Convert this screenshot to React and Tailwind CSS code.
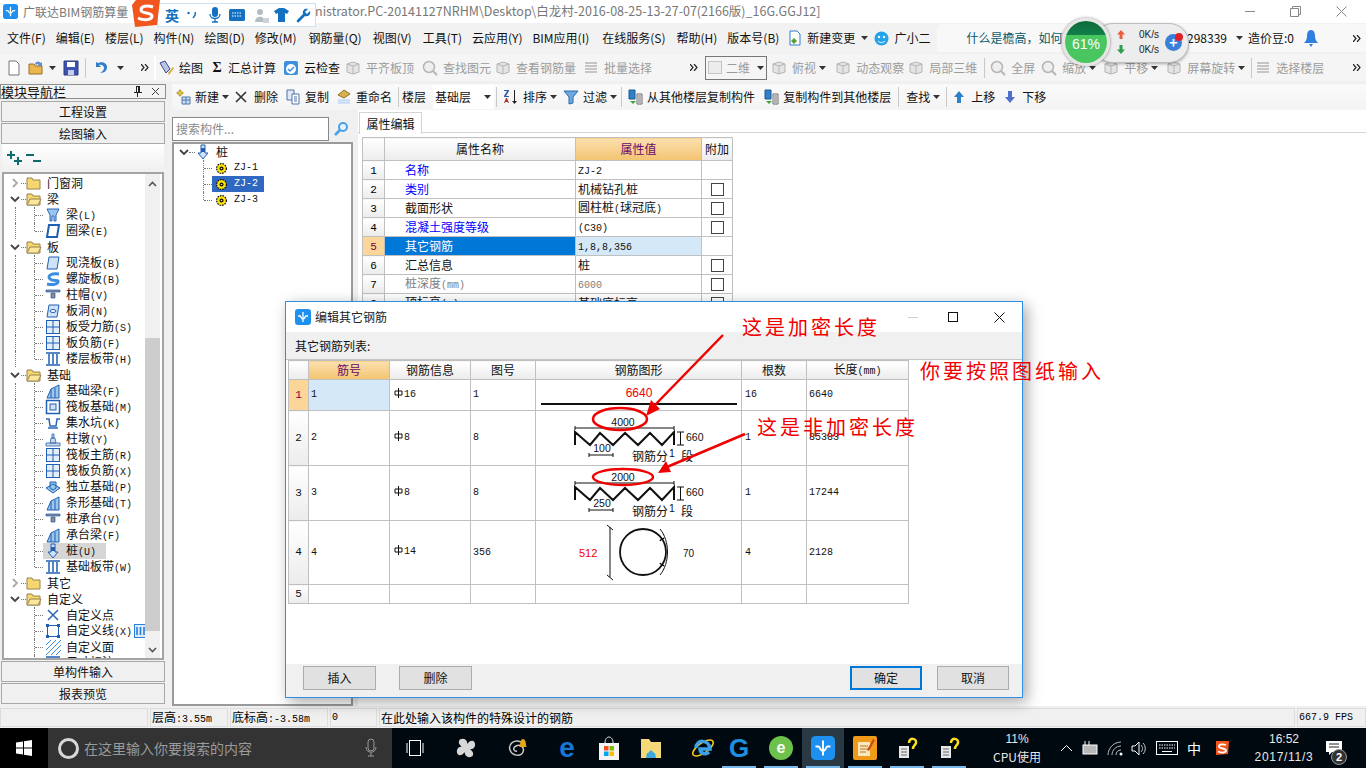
import React from "react";

const sans = "font-['Noto_Sans_CJK_SC','Noto_Sans',sans-serif]";

// CJK at 12px, latin in a 6px-wide mono, like the SimSun labels of the app
function Sim({ text, className = "" }) {
    const parts = text.split(/([\x20-\x7e]+)/).filter(Boolean);
    return (
        <span className={`inline-flex items-baseline leading-none whitespace-pre ${className}`}>
            {parts.map((p, i) =>
                /^[\x20-\x7e]+$/.test(p) ? (
                    <span key={i} className="font-['Liberation_Mono',monospace] text-[10px]">{p}</span>
                ) : (
                    <span key={i} className="text-[12px]">{p}</span>
                )
            )}
        </span>
    );
}

const Svg = ({ children, s = 16, className = "" }) => (
    <svg width={s} height={s} viewBox="0 0 16 16" className={`shrink-0 ${className}`}>{children}</svg>
);

const Caret = ({ className = "" }) => (
    <svg width="7" height="4" viewBox="0 0 7 4" className={`shrink-0 ${className}`}><path d="M0 0h7L3.5 4z" fill="#333" /></svg>
);

const Sep = ({ className = "" }) => <div className={`w-px h-5 bg-[#c8c8c8] shrink-0 ${className}`} />;

const Dbl = ({ className = "" }) => (
    <svg width="8" height="7" viewBox="0 0 8 7" className={`shrink-0 ${className}`}>
        <path d="M0 0l3 3.5L0 7M4 0l3 3.5L4 7" fill="none" stroke="#222" strokeWidth="1.2" />
    </svg>
);

const GrayBox = () => (
    <Svg>
        <path d="M2 4l6-2 6 2v8l-6 2-6-2z" fill="#e4e4e4" stroke="#b5b5b5" />
        <path d="M2 4l6 2 6-2M8 6v8" fill="none" stroke="#b5b5b5" />
    </Svg>
);
const GrayLens = () => (
    <Svg>
        <circle cx="7" cy="7" r="5.5" fill="#eee" stroke="#b5b5b5" strokeWidth="1.5" />
        <path d="M11 11l4 4" stroke="#b5b5b5" strokeWidth="2" />
    </Svg>
);
const GrayLines = () => (
    <Svg>
        <path d="M2 3h12M2 6h12M2 9h12M2 12h12" stroke="#b5b5b5" strokeWidth="1.5" />
    </Svg>
);

const treeIcons = {
    beam: <path d="M2 2h12l-3 6v6H9V9H7v5H5V8z" fill="#9cc5ea" stroke="#2a66b8" />,
    ring: <path d="M4 2h10l-2 12H2z" fill="#fff" stroke="#1f5fb4" strokeWidth="2" />,
    slab: <path d="M4 2h10l-2 12H2z" fill="#cfe2f6" stroke="#1f5fb4" />,
    spiral: <path d="M14 3C6 2 2 5 5 8s9 0 8 3-7 3-11 2" fill="none" stroke="#3d8ee0" strokeWidth="3" />,
    cap: <path d="M1 3h14v2H1zM6 6h4v5H6z" fill="#8a8a8a" stroke="#1f5fb4" strokeWidth=".7" />,
    hole: <><path d="M4 2h10l-2 12H2z" fill="#cfe2f6" stroke="#1f5fb4" /><ellipse cx="8" cy="8" rx="3" ry="1.5" fill="#fff" stroke="#1f5fb4" /></>,
    grid: <><rect x="1.5" y="1.5" width="13" height="13" fill="#e3eefa" stroke="#1f5fb4" /><path d="M1.5 8h13M8 1.5v13" stroke="#1f5fb4" /></>,
    band: <path d="M1 2h14M1 14h14M4 3v10M8 3v10M12 3v10" stroke="#1f5fb4" strokeWidth="1.5" fill="none" />,
    foot: <><path d="M2 15l4-9 8-4v13z" fill="#9cc5ea" stroke="#1f5fb4" /><path d="M6 6v9M10 5v10" stroke="#1f5fb4" /></>,
    raft: <><rect x="1.5" y="1.5" width="13" height="13" fill="#fff" stroke="#1f5fb4" strokeWidth="1.5" /><rect x="5" y="5" width="6" height="6" fill="#cfe2f6" stroke="#1f5fb4" /></>,
    pit: <path d="M1 4l3 0 1 7h6l1-7 3 0M3 13h10" fill="none" stroke="#2a66b8" strokeWidth="1.5" />,
    pier: <path d="M1 12h14v3H1zM5 12l1-5h4l1 5zM7 3h2v4H7z" fill="#cfd8e2" stroke="#2a66b8" strokeWidth=".8" />,
    iso: <path d="M1 9l7-4 7 4-7 5zM5 3h6v6l-3 2-3-2z" fill="#9cc5ea" stroke="#1f5fb4" />,
    pile: <><path d="M6 1h4v8h3l-5 6-5-6h3z" fill="#cfe2f6" stroke="#1f5fb4" /><rect x="6" y="4" width="4" height="4" fill="#1f5fb4" /></>,
    cross: <path d="M3 3l10 10M13 3L3 13" stroke="#2a66b8" strokeWidth="1.5" />,
    line: <><rect x="2.5" y="2.5" width="11" height="11" fill="none" stroke="#1f5fb4" /><path d="M1 1h3v3H1zM12 1h3v3h-3zM1 12h3v3H1zM12 12h3v3h-3z" fill="#1f5fb4" /></>,
    hatch: <path d="M1 6l5-5M1 11L11 1M1 16L16 1M6 16L16 6M11 16l5-5" stroke="#3d8ee0" />,
};

const tree = [
    { t: "门窗洞", folder: true, closed: true },
    { t: "梁", folder: true },
    { t: "梁(L)", i: "beam" }, { t: "圈梁(E)", i: "ring", last: true },
    { t: "板", folder: true },
    { t: "现浇板(B)", i: "slab" }, { t: "螺旋板(B)", i: "spiral" }, { t: "柱帽(V)", i: "cap" }, { t: "板洞(N)", i: "hole" },
    { t: "板受力筋(S)", i: "grid" }, { t: "板负筋(F)", i: "grid" }, { t: "楼层板带(H)", i: "band", last: true },
    { t: "基础", folder: true },
    { t: "基础梁(F)", i: "foot" }, { t: "筏板基础(M)", i: "raft" }, { t: "集水坑(K)", i: "pit" }, { t: "柱墩(Y)", i: "pier" },
    { t: "筏板主筋(R)", i: "grid" }, { t: "筏板负筋(X)", i: "grid" }, { t: "独立基础(P)", i: "iso" }, { t: "条形基础(T)", i: "foot" },
    { t: "桩承台(V)", i: "cap" }, { t: "承台梁(F)", i: "foot" }, { t: "桩(U)", i: "pile", sel: true }, { t: "基础板带(W)", i: "band", last: true },
    { t: "其它", folder: true, closed: true },
    { t: "自定义", folder: true },
    { t: "自定义点", i: "cross", noOuter: true }, { t: "自定义线(X)", i: "line", noOuter: true, extra: true }, { t: "自定义面", i: "hatch", noOuter: true },
    { t: "尺寸标注(C)", i: "band", noOuter: true },
];

function Folder({ open }) {
    return (
        <Svg>
            <path d="M1 3h5l1 2h7v9H1z" fill="#f6d66f" stroke="#9a8450" />
            {open && <path d="M1 14l3-6h11l-3 6z" fill="#fbe79c" stroke="#9a8450" />}
        </Svg>
    );
}

function Chevron({ closed }) {
    return (
        <svg width="10" height="10" viewBox="0 0 10 10" className="shrink-0">
            {closed
                ? <path d="M3 1l4 4-4 4" fill="none" stroke="#aaa" strokeWidth="1.8" />
                : <path d="M1 3l4 4 4-4" fill="none" stroke="#444" strokeWidth="1.8" />}
        </svg>
    );
}

const VDots = ({ half }) => (
    <div className={`w-0 border-l border-dotted border-[#777] shrink-0 ${half ? "h-2 self-start" : "h-4"}`} />
);
const HDots = ({ className }) => <div className={`border-t border-dotted border-[#777] shrink-0 ${className}`} />;

function TreeRow({ r }) {
    if (r.folder) {
        return (
            <div className="flex items-center h-4 pl-[6px]">
                <Chevron closed={r.closed} />
                <HDots className="w-[5px] ml-px" />
                <Folder open={!r.closed} />
                <span className="ml-[5px] text-[12px] leading-none text-[#111]">{r.t}</span>
            </div>
        );
    }
    return (
        <div className="flex items-center h-4 pl-[11px]">
            {r.noOuter ? <div className="w-px shrink-0" /> : <VDots />}
            <div className="w-[18px] shrink-0" />
            <VDots half={r.last} />
            <HDots className="w-[8px]" />
            <div className={`flex items-center h-4 pl-[2px] ${r.sel ? "bg-[#d6d6d6] pr-[10px]" : "pr-[3px]"}`}>
                <Svg>{treeIcons[r.i]}</Svg>
                <Sim text={r.t} className="ml-[5px] text-[#111]" />
            </div>
            {r.extra && (
                <svg width="13" height="14" viewBox="0 0 13 14" className="shrink-0 -ml-px">
                    <rect x=".5" y=".5" width="12" height="13" fill="#dcebfb" stroke="#2a7fd6" />
                    <path d="M3 3v8M6.500 3v8M10 3v8" stroke="#2a7fd6" strokeWidth="1.6" />
                </svg>
            )}
        </div>
    );
}

function NavButton({ children }) {
    return (
        <div className="h-[21px] mx-px flex items-center justify-center border border-[#a8a8a8] bg-[#f0f0f0] text-[12px] text-[#111] shrink-0">
            {children}
        </div>
    );
}

function LeftPanel() {
    return (
        <div className="w-[166px] shrink-0 flex flex-col bg-[#f0f0f0]">
            <div className="h-[15px] border border-[#8e8e8e] flex items-center text-[13px] leading-none text-[#111] bg-[#f3f3f3] shrink-0">
                <span>模块导航栏</span>
                <svg width="10" height="11" viewBox="0 0 10 11" className="ml-auto"><path d="M3 0v6H1v1h3v4h1V7h4V6H7V0zM4 1h1v5H4z" fill="#222" /></svg>
                <svg width="9" height="9" viewBox="0 0 9 9" className="ml-[8px] mr-[5px]"><path d="M1 1l7 7M8 1L1 8" stroke="#444" /></svg>
            </div>
            <div className="h-[2px] shrink-0" />
            <NavButton>工程设置</NavButton>
            <div className="h-px shrink-0" />
            <NavButton>绘图输入</NavButton>
            <div className="h-[28px] mx-[2px] flex items-center pl-[5px] gap-[3px] bg-gradient-to-b from-white to-[#f0f0f0] shrink-0">
                <svg width="16" height="16" viewBox="0 0 16 16"><path d="M3 1h2v3h3v2H5v3H3V6H0V4h3zM10 7h2v3h3v2h-3v3h-2v-3H7v-2h3z" fill="#0e6b6b" /></svg>
                <svg width="16" height="16" viewBox="0 0 16 16"><path d="M0 4h8v2H0zM7 10h8v2H7z" fill="#0e6b6b" /></svg>
            </div>
            <div className="h-[488px] mx-[2px] border-2 border-[#a4a4a4] bg-white flex overflow-hidden shrink-0">
                <div className="flex-1 min-w-0 pt-[1px] overflow-hidden bg-white">
                    {tree.map((r, i) => <TreeRow key={i} r={r} />)}
                </div>
                <div className="w-[15px] shrink-0 bg-[#f0f0f0] flex flex-col items-center mr-[2px]">
                    <svg width="9" height="6" viewBox="0 0 9 6" className="mt-[7px] mb-[150px]"><path d="M1 5l3.500-3.500L8 5" fill="none" stroke="#555" strokeWidth="1.6" /></svg>
                    <div className="h-[293px] w-full bg-[#cdcdcd] mt-[1px]" />
                    <svg width="9" height="6" viewBox="0 0 9 6" className="mt-[16px]"><path d="M1 1l3.500 3.500L8 1" fill="none" stroke="#555" strokeWidth="1.6" /></svg>
                </div>
            </div>
            <div className="h-px shrink-0" />
            <NavButton>单构件输入</NavButton>
            <div className="h-px shrink-0" />
            <NavButton>报表预览</NavButton>
        </div>
    );
}

function Tool({ icon, label, off, caret, className = "", labelCls = "ml-[5px]" }) {
    return (
        <div className={`flex items-center shrink-0 text-[12px] ${off ? "text-[#9c9c9c]" : "text-[#111]"} ${className}`}>
            {icon}
            <span className={`whitespace-nowrap ${labelCls}`}>{label}</span>
            {caret && <Caret className="ml-[3px]" />}
        </div>
    );
}

function TopToolbar() {
    return (
        <div className="h-[27px] flex items-center bg-[#f5f5f5] shrink-0 pl-[6px]">
            <Svg><path d="M3 1h7l3 3v11H3z" fill="#fff" stroke="#777" /></Svg>
            <Svg className="ml-[6px]"><path d="M1 4h5l1 2h7v8H1z" fill="#e9b64f" stroke="#96702a" /><path d="M7 3c2-2 4-2 6 0l1-1v4h-4l1-1c-1-1-2-1-3 0z" fill="#5d8fd0" /></Svg>
            <Caret className="ml-[5px]" />
            <Svg className="ml-[7px]" s={16}><path d="M1 1h14v14H1z" fill="#3d52b0" stroke="#2a3a80" /><path d="M4 2h8v5H4z" fill="#fff" /><path d="M5 10h6v5H5z" fill="#c5cdea" /></Svg>
            <Sep className="ml-[6px]" />
            <Svg className="ml-[6px]"><path d="M4 2v5h5L7 5c3-1 5 1 5 3 0 2-2 4-4 5 5 0 7-3 7-6 0-4-5-6-9-4z" fill="#2f7fc9" /></Svg>
            <Caret className="ml-[9px]" />
            <Dbl className="ml-[17px]" />
            <div className="w-[2px] h-[25px] bg-white ml-[5px]" />
            <Tool className="ml-[2px]" label="绘图" icon={<Svg><path d="M2 3l5-2 5 8-4 4z" fill="#b9c6e6" stroke="#3b4b8c" /><path d="M10 13l5-6 1 1-5 7z" fill="#d6a92d" /></Svg>} />
            <Tool className="ml-[8px]" label="汇总计算" icon={<span className="w-[12px] text-center text-[14px] font-bold leading-none font-['Liberation_Serif',serif]">Σ</span>} />
            <Tool className="ml-[7px]" label="云检查" icon={<Svg><rect x="1" y="1" width="14" height="14" rx="2" fill="#3f8fdc" /><circle cx="8" cy="9" r="5" fill="#fff" /><path d="M5 9l2 2 4-4" fill="none" stroke="#3f8fdc" strokeWidth="1.500" /></Svg>} />
            <Tool off className="ml-[5px]" label="平齐板顶" icon={<GrayBox />} />
            <Tool off className="ml-[8px]" label="查找图元" icon={<GrayLens />} />
            <Tool off className="ml-[4px]" label="查看钢筋量" icon={<GrayBox />} />
            <Tool off className="ml-[7px]" label="批量选择" icon={<GrayLines />} />
            <Dbl className="ml-[38px]" />
            <div className="w-[62px] h-[24px] border border-[#777] ml-[7px] flex items-center pl-[2px] shrink-0">
                <div className="w-[14px] h-[13px] bg-[#ececec] border border-[#c4c4c4]" />
                <span className="ml-[4px] text-[12px] text-[#9c9c9c]">二维</span>
                <Caret className="ml-auto mr-[2px]" />
            </div>
            <Tool off className="ml-[4px]" label="俯视" caret icon={<GrayBox />} />
            <Tool off className="ml-[9px]" label="动态观察" icon={<GrayBox />} />
            <Tool off className="ml-[4px]" label="局部三维" icon={<GrayBox />} />
            <Sep className="ml-[7px]" />
            <Tool off className="ml-[5px]" label="全屏" icon={<GrayLens />} />
            <Tool off className="ml-[6px]" label="缩放" caret icon={<GrayLens />} />
            <Tool off className="ml-[7px]" label="平移" caret icon={<GrayBox />} />
            <Tool off className="ml-[8px]" label="屏幕旋转" caret icon={<GrayBox />} />
            <Sep className="ml-[6px]" />
            <Tool off className="ml-[3px]" label="选择楼层" icon={<GrayLines />} />
            <Dbl className="ml-[29px]" />
        </div>
    );
}

function SecondToolbar() {
    const lab = "ml-[4px]";
    return (
        <div className="h-[26px] flex items-center bg-gradient-to-b from-[#fafafa] to-[#f4f4f4] pl-[3px] shrink-0">
            <Tool labelCls={lab} label="新建" caret icon={<Svg><path d="M4 1h2v2h2v2H6v2H4V5H2V3h2z" fill="#e8c33c" stroke="#9a7f1c" strokeWidth=".5" /><path d="M7 8h8v7H7z" fill="#cfe0f4" stroke="#4a78b0" /><path d="M7 11h8M11 8v7" stroke="#4a78b0" /></Svg>} />
            <svg width="12" height="12" viewBox="0 0 12 12" className="ml-[6px] shrink-0"><path d="M1 1l10 10M11 1L1 11" stroke="#333" strokeWidth="1.6" /></svg>
            <span className="ml-[7px] text-[12px] text-[#111]">删除</span>
            <Tool labelCls={lab} className="ml-[7px]" label="复制" icon={<Svg><path d="M2 1h7v10H2z" fill="#dfe9f7" stroke="#4f72a8" /><path d="M7 5h7v10H7z" fill="#fff" stroke="#4f72a8" /><path d="M9 8h3M9 10h3M9 12h3" stroke="#4f72a8" /></Svg>} />
            <Tool labelCls={lab} className="ml-[7px]" label="重命名" icon={<Svg><path d="M2 6l6-5 6 4-6 4z" fill="#d9b04c" stroke="#8f7326" /><path d="M2 10h12v5H2z" fill="#cfe0f4" /></Svg>} />
            <Sep className="ml-[6px]" />
            <span className="ml-[3px] text-[12px] text-[#111]">楼层</span>
            <div className="ml-[7px] w-[61px] h-[24px] bg-white flex items-center pl-[2px] shrink-0">
                <span className="text-[12px] text-[#111]">基础层</span>
                <Caret className="ml-auto mr-[3px]" />
            </div>
            <Sep className="ml-[2px]" />
            <Tool labelCls={lab} className="ml-[6px]" label="排序" caret icon={<Svg><path d="M1 1h5v1L3 7h3v1H1V7l3-5H1z" fill="#2f5da8" /><path d="M1 14l2-5h1l2 5H5l-.5-1h-2L2 14z" fill="#a83a2f" /><path d="M11 1h1v11h2l-2.500 3L9 12h2z" fill="#222" /></Svg>} />
            <Tool labelCls={lab} className="ml-[6px]" label="过滤" caret icon={<Svg><path d="M1 2h14L10 8v6l-4 1V8z" fill="#6ea8e0" stroke="#2f6aaa" /></Svg>} />
            <Sep className="ml-[4px]" />
            <Tool labelCls={lab} className="ml-[5px]" label="从其他楼层复制构件" icon={<Svg><path d="M2 1h6v9H2z" fill="#2f7fc9" stroke="#1d5a94" /><path d="M3 12l3 3 3-3z" fill="#3ca53c" /><path d="M10 5h5v10h-5z" fill="#fff" stroke="#666" /><path d="M11 7h3M11 9h3M11 11h3M11 13h3" stroke="#666" /></Svg>} />
            <Tool labelCls={lab} className="ml-[8px]" label="复制构件到其他楼层" icon={<Svg><path d="M2 1h6v9H2z" fill="#2f7fc9" stroke="#1d5a94" /><path d="M3 12l3 3 3-3z" fill="#3ca53c" /><path d="M10 5h5v10h-5z" fill="#fff" stroke="#666" /><path d="M11 7h3M11 9h3M11 11h3M11 13h3" stroke="#666" /></Svg>} />
            <Sep className="ml-[7px]" />
            <span className="ml-[7px] text-[12px] text-[#111]">查找</span>
            <Caret className="ml-[3px]" />
            <Sep className="ml-[6px]" />
            <Tool labelCls={lab} className="ml-[4px]" label="上移" icon={<Svg><path d="M8 2l5 6h-3v6H6V8H3z" fill="#2f7fc9" /></Svg>} />
            <Tool labelCls={lab} className="ml-[7px]" label="下移" icon={<Svg><path d="M8 14l5-6h-3V2H6v6H3z" fill="#4f6fc9" /></Svg>} />
        </div>
    );
}

function ComponentTree() {
    const gear = (
        <Svg s={13}>
            <circle cx="8" cy="8" r="6" fill="#ffe400" stroke="#111" strokeWidth="1.500" strokeDasharray="2 1.200" />
            <circle cx="8" cy="8" r="2.500" fill="#111" />
            <circle cx="8" cy="8" r="1" fill="#ffe400" />
        </Svg>
    );
    return (
        <div className="w-[182px] shrink-0 flex flex-col">
            <div className="flex items-center h-[24px] mt-[7px] shrink-0">
                <div className="w-[157px] h-full border border-[#888] bg-white flex items-center pl-[3px] text-[12px] text-[#8a8a8a]">搜索构件...</div>
                <svg width="16" height="16" viewBox="0 0 16 16" className="ml-[4px]"><circle cx="10" cy="6" r="4" fill="#e6f3ff" stroke="#4aa0e6" strokeWidth="2" /><path d="M7 9l-5 5" stroke="#4aa0e6" strokeWidth="2.500" /></svg>
            </div>
            <div className="flex-1 mt-px mr-px border-2 border-[#9a9a9a] bg-white pl-[5px] overflow-hidden">
                <div className="flex items-center h-4">
                    <Chevron />
                    <HDots className="w-[6px]" />
                    <Svg><path d="M6 1h4v8h3l-5 6-5-6h3z" fill="#cfe2f6" stroke="#1f5fb4" /><rect x="6" y="4" width="4" height="4" fill="#1f5fb4" /></Svg>
                    <span className="ml-[5px] text-[12px] leading-none text-[#111]">桩</span>
                </div>
                {["ZJ-1", "ZJ-2", "ZJ-3"].map((z) => (
                    <div key={z} className="flex items-center h-4 pl-[24px]">
                        <VDots half={z === "ZJ-3"} />
                        <HDots className="w-[8px]" />
                        <div className={`flex items-center h-4 w-[52px] pl-[3px] ${z === "ZJ-2" ? "bg-[#2f68c0] text-white" : "text-[#111]"}`}>
                            {gear}
                            <span className="ml-[6px] font-['Liberation_Mono',monospace] text-[10px] leading-none">{z}</span>
                        </div>
                    </div>
                ))}
            </div>
        </div>
    );
}

const Check = () => <div className="w-[13px] h-[13px] border border-[#444] bg-white mx-auto" />;

const props = [
    { n: "名称", v: "ZJ-2", blue: true },
    { n: "类别", v: "机械钻孔桩", blue: true, c: true },
    { n: "截面形状", v: "圆柱桩(球冠底)", c: true },
    { n: "混凝土强度等级", v: "(C30)", blue: true, c: true },
    { n: "其它钢筋", v: "1,8,8,356", sel: true },
    { n: "汇总信息", v: "桩", c: true },
    { n: "桩深度(mm)", v: "6000", gray: true, c: true },
    { n: "顶标高(m)", v: "基础底标高", c: true },
];

const thCls = "border border-[#c0c0c0] bg-gradient-to-b from-white to-[#ececec] font-normal text-[12px] text-[#111] p-0";
const hotCls = "border border-[#c0c0c0] bg-gradient-to-b from-[#fbdfae] to-[#f3c46f] font-normal text-[12px] text-[#6a0a6a] p-0";
const numCls = "border border-[#c0c0c0] bg-gradient-to-b from-white to-[#ececec] text-center p-0";

function PropertyPane() {
    return (
        <div className="flex-1 min-w-0 bg-white flex flex-col ml-[4px] pt-[2px]">
            <div className="h-[21px] border-b border-[#d4d4d4] flex pl-px shrink-0">
                <div className="w-[63px] h-[22px] border border-b-0 border-[#d4d4d4] bg-white flex items-center justify-center text-[12px] text-[#111]">属性编辑</div>
            </div>
            <table className="table-fixed border-collapse ml-[4px] mt-[4px] w-[370px] bg-white leading-none">
                <colgroup>
                    <col className="w-[22px]" /><col className="w-[191px]" /><col className="w-[126px]" /><col className="w-[31px]" />
                </colgroup>
                <thead>
                    <tr className="h-[23px]">
                        <th className={thCls} /><th className={thCls}>属性名称</th><th className={hotCls}>属性值</th><th className={thCls}>附加</th>
                    </tr>
                </thead>
                <tbody>
                    {props.map((r, i) => (
                        <tr key={r.n} className="h-[19px]">
                            <td className={r.sel ? "border border-[#c0c0c0] bg-[#fcd598] text-center p-0 text-[#800040]" : numCls}>
                                <span className="relative -top-[2px] font-['Liberation_Mono',monospace] text-[11px]">{i + 1}</span>
                            </td>
                            <td className={`border border-[#c0c0c0] p-0 pl-[20px] ${r.sel ? "bg-[#0078d7] text-white" : r.blue ? "text-[#0000ff]" : r.gray ? "text-[#808080]" : "text-[#111]"}`}>
                                <Sim text={r.n} className="relative -top-[2px]" />
                            </td>
                            <td className={`border border-[#c0c0c0] p-0 pl-[2px] ${r.sel ? "bg-[#d5e8f8] text-[#111]" : r.gray ? "text-[#808080]" : "text-[#111]"}`}>
                                <Sim text={r.v} className="relative -top-[2px]" />
                            </td>
                            <td className="border border-[#c0c0c0] p-0">{r.c && <Check />}</td>
                        </tr>
                    ))}
                </tbody>
            </table>
        </div>
    );
}

const DimText = ({ x, y, children, fill = "#111", anchor = "start", size = 10.5, cjk = false }) => (
    <text x={x} y={y} fill={fill} textAnchor={anchor} fontSize={size} fontFamily={cjk ? "'Noto Sans CJK SC',sans-serif" : "'Liberation Sans',sans-serif"}>{children}</text>
);

function Zigzag({ top, small }) {
    return (
        <svg width="205" height="54" viewBox="0 0 205 54" className="block">
            <DimText x="87" y="15" anchor="middle">{top}</DimText>
            <path d="M39 15v4M39 17h99M138 15v4" stroke="#111" fill="none" />
            <path d="M39 34V21l15 13 10-12 13 12 12-12 13 12 12-12 12 12 12-13v13" stroke="#111" strokeWidth="2" fill="none" />
            <path d="M141 21h7M144.500 21v13M141 34h7" stroke="#111" fill="none" />
            <DimText x="150" y="30">660</DimText>
            <DimText x="66" y="41" anchor="middle">{small}</DimText>
            <path d="M53 42v4M53 44h24M77 42v4" stroke="#111" fill="none" />
            <DimText x="96" y="50" size={12} cjk>钢筋分</DimText>
            <DimText x="133" y="46">1</DimText>
            <DimText x="145" y="50" size={12} cjk>段</DimText>
        </svg>
    );
}

function Circ() {
    return (
        <svg width="205" height="63" viewBox="0 0 205 63" className="block">
            <DimText x="43" y="36" fill="#f00000" size={11}>512</DimText>
            <path d="M74 6v50M71 4l6 5M71 54l6 5" stroke="#111" fill="none" />
            <circle cx="107" cy="31" r="23" fill="none" stroke="#111" strokeWidth="1.800" />
            <path d="M124 20c1-2 3-2 4-3M124 42c1 2 3 2 4 3" fill="none" stroke="#111" strokeWidth="1.500" />
            <path d="M124 8c10 12 10 34 0 46" fill="none" stroke="#111" />
            <DimText x="147" y="36" size={10}>70</DimText>
        </svg>
    );
}

const steel = [
    { h: "h-[30px]", v: "1", d: "⌀16", img: "1", fig: "line", n: "16", len: "6640" },
    { h: "h-[55px]", v: "2", d: "⌀8", img: "8", fig: "a", n: "1", len: "85383" },
    { h: "h-[55px]", v: "3", d: "⌀8", img: "8", fig: "b", n: "1", len: "17244" },
    { h: "h-[64px]", v: "4", d: "⌀14", img: "356", fig: "c", n: "4", len: "2128" },
    { h: "h-[19px]", v: "5" },
];

const cellCls = "border border-[#c0c0c0] p-0 pl-[2px] font-['Liberation_Mono',monospace] text-[10px] text-[#111]";

function SteelMark({ d }) {
    if (!d) return null;
    return (
        <span className="inline-flex items-center">
            <svg width="9" height="10" viewBox="0 0 9 10" className="mr-px relative -top-px"><path d="M1 3h7v4H1zM4.500 0v10" fill="none" stroke="#111" /></svg>
            <span className="relative top-px">{d.slice(1)}</span>
        </span>
    );
}

function Figure({ f }) {
    if (f === "line") {
        return (
            <svg width="205" height="30" viewBox="0 0 205 30" className="block">
                <DimText x="103" y="17" anchor="middle" fill="#f00000" size={12}>6640</DimText>
                <path d="M5 24h196" stroke="#111" strokeWidth="2" />
            </svg>
        );
    }
    if (f === "a") return <Zigzag top="4000" small="100" />;
    if (f === "b") return <Zigzag top="2000" small="250" />;
    if (f === "c") return <Circ />;
    return null;
}

function Dialog() {
    return (
        <div className="absolute left-[285px] top-[301px] w-[738px] h-[397px] border border-[#2f8fe6] bg-white flex flex-col shadow-[4px_4px_14px_rgba(0,0,0,0.35)]">
            <div className="h-[30px] flex items-center pl-[9px] shrink-0">
                <AppIcon s={16} />
                <span className="ml-[4px] text-[12px] text-[#222] whitespace-nowrap">编辑其它钢筋</span>
                <div className="w-[10px] h-px bg-[#d0d0d0] ml-[521px] shrink-0" />
                <div className="w-[10px] h-[10px] border border-[#111] ml-[30px] shrink-0" />
                <svg width="11" height="11" viewBox="0 0 11 11" className="ml-[36px] shrink-0"><path d="M.5.5l10 10M10.500.5l-10 10" stroke="#111" /></svg>
            </div>
            <div className="h-[28px] bg-[#f0f0f0] flex items-center pl-[9px] text-[12px] text-[#111] border-b border-[#c4c4c4] shrink-0">其它钢筋列表:</div>
            <div className="flex-1 min-h-0">
                <table className="table-fixed border-collapse ml-[2px] w-[620px] leading-none">
                    <colgroup>
                        <col className="w-[20px]" /><col className="w-[81px]" /><col className="w-[81px]" /><col className="w-[65px]" />
                        <col className="w-[206px]" /><col className="w-[65px]" /><col className="w-[102px]" />
                    </colgroup>
                    <thead>
                        <tr className="h-[19px]">
                            <th className={thCls} /><th className={hotCls}>筋号</th><th className={thCls}>钢筋信息</th><th className={thCls}>图号</th>
                            <th className={thCls}>钢筋图形</th><th className={thCls}>根数</th>
                            <th className={thCls}><Sim text="长度(mm)" /></th>
                        </tr>
                    </thead>
                    <tbody>
                        {steel.map((r, i) => (
                            <tr key={r.v} className={r.h}>
                                <td className={i === 0 ? "border border-[#c0c0c0] bg-[#fcd598] text-center p-0 text-[11px] text-[#800040] font-['Liberation_Mono',monospace]" : `${numCls} text-[11px] text-[#111] font-['Liberation_Mono',monospace]`}>{r.v}</td>
                                <td className={`${cellCls} ${i === 0 ? "bg-[#d5e8f8]" : ""}`}>{r.d ? r.v : ""}</td>
                                <td className={`${cellCls} pl-[4px]`}><SteelMark d={r.d} /></td>
                                <td className={cellCls}>{r.img}</td>
                                <td className="border border-[#c0c0c0] p-0"><Figure f={r.fig} /></td>
                                <td className={`${cellCls} pl-[3px]`}>{r.n}</td>
                                <td className={cellCls}>{r.len}</td>
                            </tr>
                        ))}
                    </tbody>
                </table>
            </div>
            <div className="h-[33px] bg-[#f0f0f0] flex items-start pt-[2px] shrink-0">
                <div className="ml-[17px] w-[73px] h-[24px] border border-[#adadad] bg-[#e1e1e1] flex items-center justify-center text-[12px] text-[#111]">插入</div>
                <div className="ml-[23px] w-[73px] h-[24px] border border-[#adadad] bg-[#e1e1e1] flex items-center justify-center text-[12px] text-[#111]">删除</div>
                <div className="ml-[378px] w-[72px] h-[24px] border-2 border-[#0078d7] bg-[#e1e1e1] flex items-center justify-center text-[12px] text-[#111]">确定</div>
                <div className="ml-[15px] w-[72px] h-[24px] border border-[#adadad] bg-[#e1e1e1] flex items-center justify-center text-[12px] text-[#111]">取消</div>
            </div>
        </div>
    );
}

function AppIcon({ s = 16 }) {
    return (
        <svg width={s} height={s} viewBox="0 0 16 16" className="shrink-0">
            <rect width="16" height="16" rx="3" fill="#1e90f0" />
            <path d="M8 3v10M3 7h2c1 0 1 3 3 3s2-3 3-3h2" fill="none" stroke="#fff" strokeWidth="1.300" />
        </svg>
    );
}

// red marks someone drew on top of the screenshot
function Annotations() {
    const red = "absolute text-[20px] leading-none tracking-[3px] text-[#f00000] whitespace-nowrap";
    return (
        <>
            <div className={`${red} left-[742px] top-[317px]`}>这是加密长度</div>
            <div className={`${red} left-[757px] top-[417px]`}>这是非加密长度</div>
            <div className={`${red} left-[920px] top-[361px]`}>你要按照图纸输入</div>
            <svg width="200" height="200" viewBox="0 0 200 200" className="absolute left-[570px] top-[320px] pointer-events-none">
                <path d="M153 15L84 86" stroke="#f00000" strokeWidth="2.500" />
                <path d="M76 96l5-16 9 9z" fill="#f00000" />
                <ellipse cx="50" cy="99" rx="27" ry="11" fill="none" stroke="#f00000" strokeWidth="2.500" />
                <path d="M175 114l-78 33" stroke="#f00000" strokeWidth="2.500" />
                <path d="M88 153l8-12 5 11z" fill="#f00000" />
                <ellipse cx="53" cy="157" rx="30" ry="8" fill="none" stroke="#f00000" strokeWidth="2.500" />
            </svg>
        </>
    );
}

function ImeBar() {
    return (
        <div className="absolute left-[132px] top-0 h-[28px] flex items-start">
            <svg width="28" height="27" viewBox="0 0 28 27" className="relative z-10">
                <path d="M4 0h24l-3 25-22 2-3-22z" fill="#f0561d" />
                <path d="M21 7c-6-2-12-1-12 3s11 2 11 6-8 5-14 2" fill="none" stroke="#fff" strokeWidth="3" />
            </svg>
            <div className="w-[159px] h-[24px] mt-[3px] -ml-[3px] border border-[#cfe0ee] bg-white flex items-center pl-[7px] text-[#1670c0]">
                <span className="text-[14px] font-bold leading-none">英</span>
                <svg width="10" height="10" viewBox="0 0 10 10" className="ml-[8px]"><circle cx="1.500" cy="3" r="1.200" fill="#1670c0" /><path d="M8 2c1 2 0 4-2 6" fill="none" stroke="#1670c0" strokeWidth="1.500" /></svg>
                <svg width="12" height="16" viewBox="0 0 12 16" className="ml-[12px]"><rect x="3" y="0" width="6" height="10" rx="3" fill="#1670c0" /><path d="M1 7c0 6 10 6 10 0M6 12v3M3 15h6" fill="none" stroke="#1670c0" strokeWidth="1.300" /></svg>
                <svg width="16" height="12" viewBox="0 0 16 12" className="ml-[8px]"><rect width="16" height="12" rx="1.500" fill="#1670c0" /><path d="M3 4h10M3 7h10" stroke="#fff" strokeDasharray="1.500 1" /></svg>
                <svg width="15" height="15" viewBox="0 0 15 15" className="ml-[9px]"><circle cx="6" cy="4" r="3" fill="#b4bcc4" /><path d="M1 14c0-7 10-7 10 0z" fill="#b4bcc4" /><rect x="9" y="10" width="6" height="5" fill="#cdd3d8" /></svg>
                <svg width="15" height="14" viewBox="0 0 15 14" className="ml-[5px]"><path d="M5 0h5l5 3-2 3-2-1v9H4V5L2 6 0 3z" fill="#1670c0" /></svg>
                <svg width="15" height="15" viewBox="0 0 15 15" className="ml-[7px]"><path d="M14 3l-3 3-2-2 3-3c-3-1-6 1-5 5L1 12c-1 2 1 3 2 2l6-6c4 1 6-2 5-5z" fill="#1670c0" /></svg>
            </div>
        </div>
    );
}

function SpeedWidget() {
    return (
        <div className="absolute left-[1062px] top-[18px] w-[128px] h-[48px] flex items-center">
            <div className="absolute left-[31px] top-[5px] w-[96px] h-[40px] rounded-[20px] bg-[#ededed] border border-[#bdbdbd] shadow-[0_1px_3px_rgba(0,0,0,0.3)]" />
            <div className="relative w-[48px] h-[48px] rounded-full border-[3px] border-[#e6e6e6] shadow-[0_0_3px_rgba(0,0,0,0.5)] overflow-hidden flex flex-col">
                <div className="h-[14px] bg-gradient-to-b from-[#0b6a3a] to-[#13804a]" />
                <div className="flex-1 bg-[#49c65f] flex items-start justify-center text-[14px] leading-none text-white pt-[2px] font-['Liberation_Sans',sans-serif]">61%</div>
            </div>
            <div className="relative ml-[7px] flex flex-col gap-[3px] w-[42px] text-[10px] leading-[12px] text-[#222] font-['Liberation_Sans',sans-serif]">
                <div className="flex items-center justify-between">
                    <svg width="8" height="9" viewBox="0 0 8 9"><path d="M4 0l4 4.500H5.500V9h-3V4.500H0z" fill="#e8603c" /></svg>
                    <span>0K/s</span>
                </div>
                <div className="flex items-center justify-between">
                    <svg width="8" height="9" viewBox="0 0 8 9"><path d="M4 9l4-4.500H5.500V0h-3v4.500H0z" fill="#2f9c4f" /></svg>
                    <span>0K/s</span>
                </div>
            </div>
            <div className="relative ml-[6px] w-[17px] h-[17px] rounded-full bg-[#3a80d8] flex items-center justify-center text-white text-[14px] leading-none font-bold">+</div>
            <div className="absolute left-[113px] top-[15px] w-[8px] h-[8px] rounded-full bg-[#e0202a]" />
        </div>
    );
}

const TbIcon = ({ children, on, bar = true, className = "" }) => (
    <div className={`w-[42px] h-[40px] flex items-center justify-center shrink-0 relative ${on ? "bg-[#2a3a44]" : ""} ${className}`}>
        {children}
        {bar && <div className="absolute bottom-0 left-[4px] right-[4px] h-[2px] bg-[#76b9ed]" />}
    </div>
);

function Taskbar() {
    return (
        <div className="h-[40px] flex bg-[#00090f] shrink-0 text-white">
            <div className="w-[48px] bg-black flex items-center justify-center shrink-0">
                <svg width="16" height="16" viewBox="0 0 16 16"><path d="M0 2.500l7-1v6H0zM8 1.300l8-1.200V7.500H8zM0 8.500h7v6l-7-1zM8 8.500h8v7.400l-8-1.200z" fill="#fff" /></svg>
            </div>
            <div className="w-[344px] bg-[#333333] flex items-center pl-[10px] shrink-0">
                <div className="w-[21px] h-[21px] rounded-full border-[3px] border-[#d8d8d8]" />
                <span className="ml-[5px] text-[14px] text-[#9a9a9a] leading-none">在这里输入你要搜索的内容</span>
                <svg width="12" height="20" viewBox="0 0 12 20" className="ml-auto mr-[15px]"><rect x="3" y="1" width="6" height="12" rx="3" fill="none" stroke="#999" /><path d="M1 9c0 7 10 7 10 0M6 15v3M3 18h6" fill="none" stroke="#999" /></svg>
            </div>
            <TbIcon bar={false} className="ml-[2px]">
                <svg width="20" height="16" viewBox="0 0 20 16"><rect x="4.500" y=".5" width="11" height="15" fill="none" stroke="#fff" /><path d="M2 3v10M18 3v10" stroke="#fff" /></svg>
            </TbIcon>
            <TbIcon bar={false} className="ml-[9px]">
                <svg width="22" height="22" viewBox="0 0 22 22"><path d="M11 11C6 10 3 7 4 4s7-3 8 1 0 4-1 6zM11 11c5 1 8 4 7 7s-7 3-8-1 0-4 1-6zM11 11c1-5 4-8 7-7s3 7-1 8-4 0-6-1zM11 11c-1 5-4 8-7 7s-3-7 1-8 4 0 6 1z" fill="#d8d8d8" /></svg>
            </TbIcon>
            <TbIcon bar={false} className="ml-[9px]">
                <svg width="24" height="24" viewBox="0 0 24 24"><path d="M16 6C9 3 3 8 5 14s11 7 13 2-3-8-7-6-2 6 1 5" fill="none" stroke="#c8c8c8" strokeWidth="1.500" /><path d="M15 10c0-4 1-7 3-7s3 3 3 7l1 1h-8z" fill="#e8a516" /></svg>
            </TbIcon>
            <TbIcon bar={false} className="ml-[8px]">
                <span className="text-[28px] leading-none font-bold text-[#1577d8] font-['Liberation_Sans',sans-serif]">e</span>
            </TbIcon>
            <TbIcon bar={false}>
                <svg width="22" height="24" viewBox="0 0 22 24"><path d="M1 7h20v17H1z" fill="#f4f4f4" /><path d="M7 7c0-8 8-8 8 0" fill="none" stroke="#f4f4f4" /><path d="M6 10h4.500v4.500H6z" fill="#f25022" /><path d="M11.500 10H16v4.500h-4.500z" fill="#7fba00" /><path d="M6 15.500h4.500V20H6z" fill="#00a4ef" /><path d="M11.500 15.500H16V20h-4.500z" fill="#ffb900" /></svg>
            </TbIcon>
            <TbIcon bar={false}>
                <svg width="22" height="22" viewBox="0 0 22 22"><path d="M1 2h8l2 3h10v16H1z" fill="#f5d877" /><path d="M7 16h8l1 5H6z" fill="#3fa7e0" /><path d="M8 16l3-3 3 3z" fill="#3fa7e0" /></svg>
            </TbIcon>
            <TbIcon bar={false} className="ml-[10px]">
                <svg width="26" height="26" viewBox="0 0 26 26"><ellipse cx="13" cy="13" rx="12" ry="5" transform="rotate(-35 13 13)" fill="none" stroke="#f0c419" strokeWidth="1.600" /><path d="M6 13c0-9 13-9 14 1H10c0 5 6 6 9 3" fill="none" stroke="#3aa0e8" strokeWidth="3.500" /></svg>
            </TbIcon>
            <TbIcon className="-ml-[6px]">
                <span className="text-[26px] leading-none font-bold text-[#1d8fe0] font-['Liberation_Sans',sans-serif]">G</span>
            </TbIcon>
            <TbIcon>
                <div className="w-[24px] h-[24px] rounded-full bg-[#6cc24a] flex items-center justify-center text-[16px] leading-none text-white font-bold font-['Liberation_Sans',sans-serif]">e</div>
            </TbIcon>
            <TbIcon on><AppIcon s={24} /></TbIcon>
            <TbIcon>
                <svg width="24" height="24" viewBox="0 0 24 24"><rect width="24" height="24" rx="2" fill="#f09a1a" /><path d="M5 6h12v14H5z" fill="#f8e8c0" /><path d="M7 10h8M7 13h8M7 16h6" stroke="#c07818" /><path d="M14 14l6-11 2 1-6 11z" fill="#c84a1a" /></svg>
            </TbIcon>
            <TbIcon>
                <svg width="24" height="24" viewBox="0 0 24 24"><path d="M4 10h10v12H4z" fill="#e8e8e8" /><path d="M6 13h6M6 16h6M6 19h6" stroke="#666" /><path d="M14 7c0-6 8-5 7 0-1 3-3 2-3 6" fill="none" stroke="#ffe020" strokeWidth="2.500" /></svg>
            </TbIcon>
            <TbIcon>
                <svg width="24" height="24" viewBox="0 0 24 24"><path d="M4 10h10v12H4z" fill="#e8e8e8" /><path d="M6 13h6M6 16h6M6 19h6" stroke="#666" /><path d="M14 7c0-6 8-5 7 0-1 3-3 2-3 6" fill="none" stroke="#ffe020" strokeWidth="2.500" /></svg>
            </TbIcon>
            <div className="w-[70px] ml-[12px] flex flex-col items-center justify-center text-[12px] leading-[18px] text-[#e8e8e8] shrink-0">
                <span className="font-['Liberation_Sans',sans-serif]">11%</span>
                <span>CPU使用</span>
            </div>
            <div className="flex items-center ml-[8px] shrink-0">
                <svg width="13" height="8" viewBox="0 0 13 8"><path d="M1 7l5.500-5.500L12 7" fill="none" stroke="#fff" /></svg>
                <svg width="16" height="14" viewBox="0 0 16 14" className="ml-[9px]"><rect x="1" y="4" width="14" height="9" fill="#b8b8b8" stroke="#fff" /><path d="M3 0v4M7 0v4" stroke="#fff" /></svg>
                <svg width="17" height="15" viewBox="0 0 17 15" className="ml-[9px]"><path d="M1 14C1 7 7 1 14 1M5 14c0-5 4-9 9-9M9 14c0-3 2-5 5-5" fill="none" stroke="#bbb" /><circle cx="14" cy="13" r="1.500" fill="#fff" /></svg>
                <svg width="15" height="15" viewBox="0 0 15 15" className="ml-[7px]"><path d="M1 5h3l4-4v13l-4-4H1z" fill="none" stroke="#fff" /><path d="M10 4c2 2 2 5 0 7M12 2c3 3 3 8 0 11" fill="none" stroke="#ccc" /></svg>
                <svg width="22" height="14" viewBox="0 0 22 14" className="ml-[10px]"><rect x=".5" y=".5" width="21" height="13" fill="none" stroke="#fff" /><path d="M3 4h16M3 7h16" stroke="#fff" strokeDasharray="1.500 1" /><path d="M6 10.500h10" stroke="#fff" /></svg>
                <span className="text-[14px] leading-none ml-[9px]">中</span>
                <svg width="16" height="16" viewBox="0 0 16 16" className="ml-[13px]"><path d="M2 1h13l-1 13-12 1z" fill="#f0561d" /><path d="M12 5c-3-1-7-1-7 1.500s7 1.500 7 4-5 2.500-8 1" fill="none" stroke="#fff" strokeWidth="1.800" /></svg>
            </div>
            <div className="w-[64px] ml-[22px] flex flex-col items-center justify-center text-[12px] leading-[18px] text-[#e8e8e8] shrink-0">
                <span className="font-['Liberation_Sans',sans-serif]">16:52</span>
                <span className="font-['Liberation_Sans',sans-serif] tracking-[0.7px]">2017/11/3</span>
            </div>
            <div className="relative ml-[6px] w-[24px] h-[40px] flex items-center justify-center shrink-0">
                <svg width="16" height="15" viewBox="0 0 16 15"><path d="M0 0h16v11H6l-3 3v-3H0z" fill="#fff" /><path d="M3 3h10M3 6h10" stroke="#222" /></svg>
                <div className="absolute left-[9px] top-[21px] w-[16px] h-[16px] rounded-full bg-[#333] border border-[#999] flex items-center justify-center text-[11px] font-bold leading-none font-['Liberation_Sans',sans-serif]">2</div>
            </div>
        </div>
    );
}

const menus = [
    ["文件(F)", ""], ["编辑(E)", ""], ["楼层(L)", ""], ["构件(N)", ""], ["绘图(D)", ""], ["修改(M)", ""],
    ["钢筋量(Q)", "ml-[2px]"], ["视图(V)", "ml-px"], ["工具(T)", "ml-px"], ["云应用(Y)", ""], ["BIM应用(I)", ""],
    ["在线服务(S)", "ml-[3px]"], ["帮助(H)", "ml-px"], ["版本号(B)", ""],
];

function StatusCell({ className, children }) {
    return <div className={`h-[19px] border border-[#dcdcdc] flex items-center pl-px shrink-0 ${className}`}>{children}</div>;
}

export default function App() {
    return (
        <div className={`relative w-[1366px] h-[768px] overflow-hidden bg-[#f0f0f0] flex flex-col ${sans}`}>
            {/* title bar */}
            <div className="h-[23px] bg-white flex items-center pl-[3px] shrink-0">
                <AppIcon s={15} />
                <span className="ml-[5px] w-[292px] text-[12px] text-[#777] whitespace-nowrap">广联达BIM钢筋算量</span>
                <span className="text-[12.500px] text-[#777] whitespace-nowrap">nistrator.PC-20141127NRHM\Desktop\白龙村-2016-08-25-13-27-07(2166版)_16G.GGJ12]</span>
                <div className="w-[10px] h-px bg-[#888] ml-auto" />
                <svg width="11" height="11" viewBox="0 0 11 11" className="ml-[35px]"><path d="M2.500 2.500v-2h8v8h-2M.5 2.500h8v8h-8z" fill="none" stroke="#888" /></svg>
                <svg width="11" height="11" viewBox="0 0 11 11" className="ml-[35px] mr-[19px]"><path d="M.5.5l10 10M10.500.5l-10 10" stroke="#888" /></svg>
            </div>
            {/* menu bar */}
            <div className="h-[30px] bg-[#f2f2f2] flex items-center pl-[7px] gap-[10px] text-[12px] text-[#111] shrink-0">
                {menus.map(([m, cls]) => <span key={m} className={`whitespace-nowrap ${cls}`}>{m}</span>)}
                <div className="flex items-center -ml-[2px]">
                    <Svg><path d="M3 1h7l3 3v11H3z" fill="#fff" stroke="#2f7fc9" /><path d="M7 8l3 3-3 3-3-3z" fill="#5aa02c" /></Svg>
                    <span className="ml-[4px]">新建变更</span>
                    <Caret className="ml-[6px]" />
                </div>
                <div className="flex items-center -ml-[4px]">
                    <svg width="15" height="15" viewBox="0 0 15 15"><circle cx="7.500" cy="7.500" r="7" fill="#23a3ea" /><circle cx="5" cy="6" r="1.200" fill="#fff" /><circle cx="10" cy="6" r="1.200" fill="#fff" /><path d="M4 10c2 2 5 2 7 0" fill="none" stroke="#fff" /></svg>
                    <span className="ml-[5px]">广小二</span>
                </div>
                <div className="flex-1 h-[28px] -ml-[3px] rounded-tl-[6px] bg-[#f8f8f8] flex items-center pl-[29px] min-w-0">
                    <span className="text-[#0a5a6a] whitespace-nowrap">什么是檐高，如何</span>
                    <span className="ml-auto whitespace-nowrap">298339</span>
                    <Caret className="ml-[9px]" />
                    <span className="ml-[5px] whitespace-nowrap">造价豆:0</span>
                    <svg width="14" height="17" viewBox="0 0 14 17" className="ml-[10px]"><path d="M7 0c3 0 4 3 4 6s1 5 3 7H0c2-2 3-4 3-7s1-6 4-6z" fill="#2f7fe0" /><path d="M5 14h4l-2 3z" fill="#2f7fe0" /></svg>
                    <Dbl className="ml-[35px] mr-[5px]" />
                </div>
            </div>
            <div className="h-px shrink-0" />
            <TopToolbar />
            <div className="h-[3px] shrink-0" />
            {/* work area */}
            <div className="h-[622px] flex shrink-0">
                <LeftPanel />
                <div className="flex-1 min-w-0 flex flex-col ml-[6px]">
                    <SecondToolbar />
                    <div className="flex-1 min-h-0 flex">
                        <ComponentTree />
                        <PropertyPane />
                    </div>
                </div>
            </div>
            <div className="h-[2px] shrink-0" />
            {/* status bar */}
            <div className="h-[20px] flex gap-[2px] shrink-0">
                <StatusCell className="w-[148px]" />
                <StatusCell className="w-[78px]"><Sim text="层高:3.55m" /></StatusCell>
                <StatusCell className="w-[98px]"><Sim text="底标高:-3.58m" /></StatusCell>
                <StatusCell className="w-[47px]"><Sim text="0" /></StatusCell>
                <StatusCell className="w-[916px]"><Sim text="在此处输入该构件的特殊设计的钢筋" /></StatusCell>
                <StatusCell className="flex-1"><Sim text="667.9 FPS" /></StatusCell>
            </div>
            <Taskbar />

            {/* floating windows and overlays */}
            <Dialog />
            <Annotations />
            <ImeBar />
            <SpeedWidget />
        </div>
    );
}
